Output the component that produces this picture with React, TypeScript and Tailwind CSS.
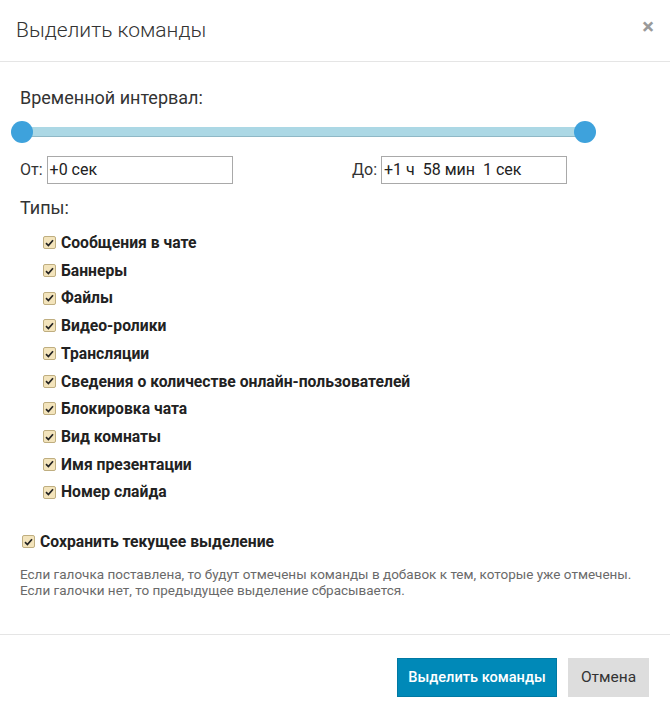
const types = [
  'Сообщения в чате',
  'Баннеры',
  'Файлы',
  'Видео-ролики',
  'Трансляции',
  'Сведения о количестве онлайн-пользователей',
  'Блокировка чата',
  'Вид комнаты',
  'Имя презентации',
  'Номер слайда',
];

function Check() {
  return (
    <span className="inline-flex items-center justify-center w-[13px] h-[13px] rounded-[2px] border border-[#bfae80] bg-[#f3e4bc] shrink-0">
      <svg width="9" height="8" viewBox="0 0 9 8">
        <path d="M1 4.2 L3.4 6.5 L8 1.2" fill="none" stroke="#222" strokeWidth="1.7" />
      </svg>
    </span>
  );
}

export default function App() {
  return (
    <div className="w-[670px] h-[719px] bg-white text-[#333] font-['Roboto',sans-serif]">
      {/* header */}
      <div className="h-[62px] border-b border-[#e5e5e5] flex items-center justify-between pl-[16px] pr-[16px]">
        <h1 className="text-[21px] font-light text-[#333] pt-[1px]">Выделить команды</h1>
        <span className="text-[22px] font-bold text-[#9a9a9a] leading-none -mt-[8px]">×</span>
      </div>

      {/* body */}
      <div className="px-[20px] pt-[24px]">
        <div className="text-[18px] leading-[24px]">Временной интервал:</div>

        <div className="relative h-[22px] mt-[11px] -ml-[9px] w-[585px]">
          <div className="absolute left-[11px] right-[11px] top-[6px] h-[10px] bg-[#acd8e5] border-b border-[#8fb8c6]" />
          <div className="absolute left-0 top-0 w-[22px] h-[22px] rounded-full bg-[#3ea2dc]" />
          <div className="absolute right-0 top-0 w-[22px] h-[22px] rounded-full bg-[#3ea2dc]" />
        </div>

        <div className="flex mt-[13px] text-[16px]">
          <label className="flex items-center w-[332px]">
            <span className="mr-[4px]">От:</span>
            <div className="w-[186px] h-[28px] border border-[#a9a9a9] px-[2px] flex items-center text-[#222]">+0 сек</div>
          </label>
          <label className="flex items-center">
            <span className="mr-[4px]">До:</span>
            <div className="w-[186px] h-[28px] border border-[#a9a9a9] px-[2px] flex items-center text-[#222] whitespace-pre">+1 ч  58 мин  1 сек</div>
          </label>
        </div>

        <div className="text-[18px] leading-[24px] mt-[12px]">Типы:</div>

        <div className="pl-[23px] mt-[9px] flex flex-col">
          {types.map((t) => (
            <div key={t} className="flex items-center gap-[5px] h-[27.7px]">
              <Check />
              <span className="text-[15.7px] font-bold text-[#222]">{t}</span>
            </div>
          ))}
        </div>

        <div className="flex items-center gap-[5px] mt-[24px] pl-[2px]">
          <Check />
          <span className="text-[15.7px] font-bold text-[#222]">Сохранить текущее выделение</span>
        </div>

        <p className="text-[13.5px] leading-[16px] text-[#6a6a6a] mt-[13px]">
          Если галочка поставлена, то будут отмечены команды в добавок к тем, которые уже отмечены.
          <br />
          Если галочки нет, то предыдущее выделение сбрасывается.
        </p>
      </div>

      {/* footer */}
      <div className="mt-[36px] border-t border-[#e5e5e5] flex justify-end gap-[11px] pt-[23px] pr-[21px]">
        <button className="h-[39px] w-[160px] bg-[#0089b8] border border-[#0079a3] text-white text-[14.6px] font-medium">
          Выделить команды
        </button>
        <button className="h-[39px] w-[81px] bg-[#dddddd] text-[#333] text-[15.5px]">Отмена</button>
      </div>
    </div>
  );
}
